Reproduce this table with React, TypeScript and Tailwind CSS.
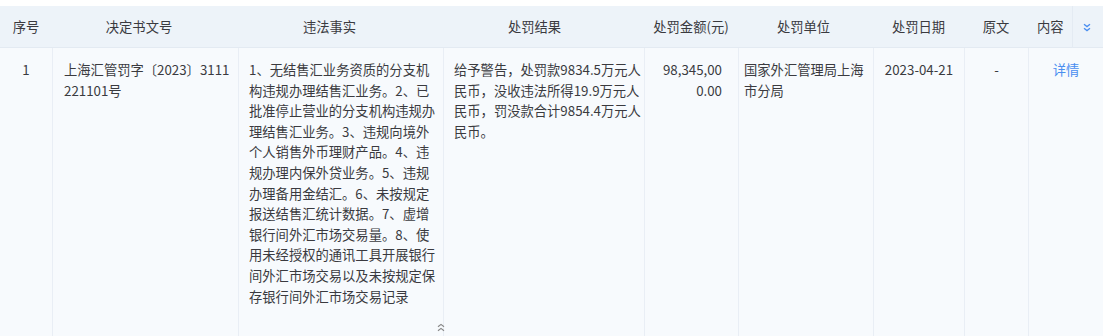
import React from 'react';

const violationLines = [
  '1、无结售汇业务资质的分支机',
  '构违规办理结售汇业务。2、已',
  '批准停止营业的分支机构违规办',
  '理结售汇业务。3、违规向境外',
  '个人销售外币理财产品。4、违',
  '规办理内保外贷业务。5、违规',
  '办理备用金结汇。6、未按规定',
  '报送结售汇统计数据。7、虚增',
  '银行间外汇市场交易量。8、使',
  '用未经授权的通讯工具开展银行',
  '间外汇市场交易以及未按规定保',
  '存银行间外汇市场交易记录',
];

const resultLines = [
  '给予警告，处罚款9834.5万元人',
  '民币，没收违法所得19.9万元人',
  '民币，罚没款合计9854.4万元人',
  '民币。',
];

// header label + extra right padding to match the offset centring of the source
const headers: [string, string][] = [
  ['序号', ''],
  ['决定书文号', 'pr-[12px]'],
  ['违法事实', 'pr-[22px]'],
  ['处罚结果', 'pr-[18px]'],
  ['处罚金额(元)', ''],
  ['处罚单位', 'pr-[4px]'],
  ['处罚日期', ''],
  ['原文', ''],
];

const cols = 'grid grid-cols-[52px_186px_205px_201px_94px_135px_91px_64px_75px]';

function Lines({ lines }: { lines: string[] }) {
  return (
    <>
      {lines.map((l) => (
        <div key={l} className="whitespace-nowrap">
          {l}
        </div>
      ))}
    </>
  );
}

function ChevronsDown({ className }: { className?: string }) {
  return (
    <svg viewBox="0 0 8 9" className={className} fill="none" stroke="currentColor" strokeWidth="1.3">
      <path d="M1 1.2 L4 3.6 L7 1.2" />
      <path d="M1 5.2 L4 7.6 L7 5.2" />
    </svg>
  );
}

function ChevronsUp({ className }: { className?: string }) {
  return (
    <svg viewBox="0 0 8 9" className={className} fill="none" stroke="currentColor" strokeWidth="1.2">
      <path d="M1 3.8 L4 1.4 L7 3.8" />
      <path d="M1 7.8 L4 5.4 L7 7.8" />
    </svg>
  );
}

export default function App() {
  return (
    <div
      className="w-[1108px] h-[336px] overflow-hidden bg-white pt-[6px] text-[13.3px] text-[#3a3a3f]"
      style={{ fontFamily: '"Noto Sans CJK SC", "Noto Sans", sans-serif' }}
    >
      <div className="w-[1103px]">
        {/* header */}
        <div className={`${cols} h-[42px] bg-[#edf3f9] border-b border-[#e3eaf2] text-[#3a3a3f]`}>
          {headers.map(([h, pad]) => (
            <div key={h} className={`flex items-center justify-center ${pad}`}>
              {h}
            </div>
          ))}
          <div className="flex items-center">
            <span className="ml-[9px]">内容</span>
            <div className="ml-[8px] h-[42px] border-l border-[#e4ebf3]" />
            <ChevronsDown className="ml-[10px] w-[8px] h-[9px] text-[#4a8ef0]" />
          </div>
        </div>

        {/* row */}
        <div className={`${cols} bg-[#f7fafd] border-b border-[#e6ecf3] leading-[20.6px]`}>
          <div className="pt-[12px] text-center">1</div>
          <div className="pt-[12px] pl-[11px] border-l border-[#e9eef5]">
            <Lines lines={['上海汇管罚字〔2023〕3111', '221101号']} />
          </div>
          <div className="relative pt-[12px] pb-[31px] pl-[10px] border-l border-[#e9eef5]">
            <Lines lines={violationLines} />
            <ChevronsUp className="absolute right-[-2px] bottom-[6px] w-[8px] h-[9px] text-[#888]" />
          </div>
          <div className="pt-[12px] pl-[10px] border-l border-[#e9eef5]">
            <Lines lines={resultLines} />
          </div>
          <div className="pt-[12px] pr-[16px] text-right border-l border-[#e9eef5]">
            <Lines lines={['98,345,00', '0.00']} />
          </div>
          <div className="pt-[12px] pl-[5px] border-l border-[#e9eef5]">
            <Lines lines={['国家外汇管理局上海', '市分局']} />
          </div>
          <div className="pt-[12px] text-center border-l border-[#e9eef5]">2023-04-21</div>
          <div className="pt-[12px] text-center border-l border-[#e9eef5]">-</div>
          <div className="pt-[12px] text-center border-l border-[#e9eef5] text-[#4a8ef0]">详情</div>
        </div>

        {/* next row edge */}
        <div className={`${cols} h-[20px] bg-[#fbfcfe]`}>
          <div />
          <div className="border-l border-[#eef2f7]" />
          <div className="border-l border-[#eef2f7]" />
          <div className="border-l border-[#eef2f7]" />
          <div className="border-l border-[#eef2f7]" />
          <div className="border-l border-[#eef2f7]" />
          <div className="border-l border-[#eef2f7]" />
          <div className="border-l border-[#eef2f7]" />
          <div className="border-l border-[#eef2f7]" />
        </div>
      </div>
    </div>
  );
}
